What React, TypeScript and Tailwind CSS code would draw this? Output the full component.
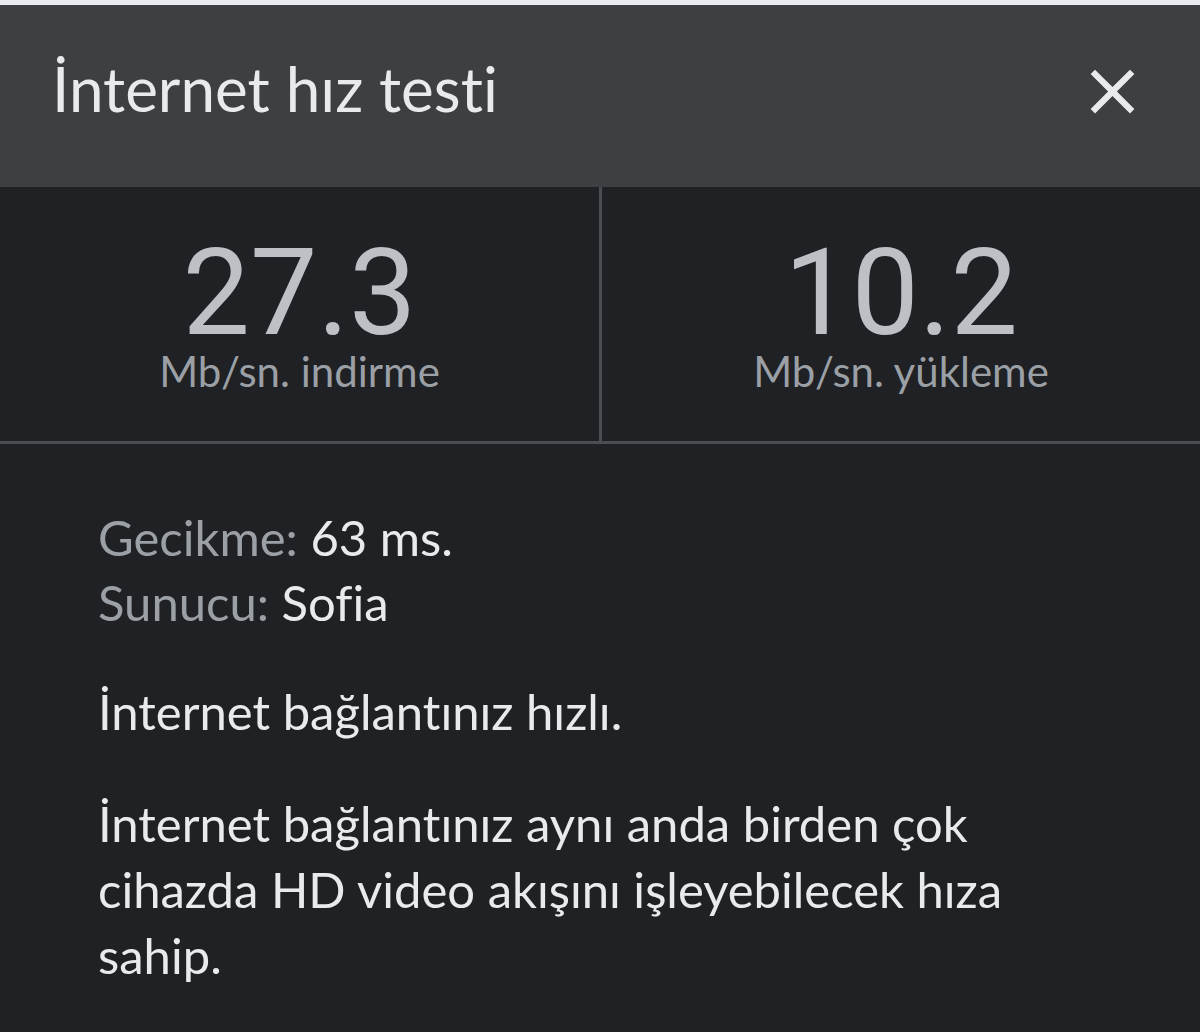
import { useState } from "react";

const stats = [
  { value: "27.3", unit: "Mb/sn. indirme" },
  { value: "10.2", unit: "Mb/sn. yükleme" },
];

function CloseIcon() {
  return (
    <svg viewBox="0 0 24 24" className="w-[75px] h-[75px]" fill="#e8eaed">
      <path d="M19 6.41 17.59 5 12 10.59 6.41 5 5 6.41 10.59 12 5 17.59 6.41 19 12 13.41 17.59 19 19 17.59 13.41 12z" />
    </svg>
  );
}

export default function App() {
  const [open, setOpen] = useState(true);

  return (
    <div className="w-[1200px] h-[1032px] overflow-hidden bg-[#202124] font-['Lato',sans-serif] [font-variant-ligatures:none]">
      <div className="h-[5px] bg-[#e8eaf0]" />
      {open && (
        <>
          <header className="h-[182px] bg-[#3c4043] flex items-start justify-between pl-[52px] pr-[50px]">
            <h1 className="mt-[52px] text-[62px] leading-[62px] text-[#e8eaed]">
              İnternet hız testi
            </h1>
            <button
              type="button"
              aria-label="Kapat"
              onClick={() => setOpen(false)}
              className="grid place-items-center mt-[49px]"
            >
              <CloseIcon />
            </button>
          </header>

          <div className="grid grid-cols-[602px_1fr] h-[257px] border-b-[3px] border-[#4a4d51]">
            {stats.map((s, i) => (
              <div
                key={s.unit}
                className={
                  i === 0
                    ? "flex flex-col items-center pt-[53px] border-r-[3px] border-[#4a4d51]"
                    : "flex flex-col items-center pt-[53px]"
                }
              >
                <span className="font-['Roboto',sans-serif] text-[120px] leading-[106px] text-[#bdc1c6]">
                  {s.value}
                </span>
                <span className="text-[42px] leading-[50px] text-[#9aa0a6]">
                  {s.unit}
                </span>
              </div>
            ))}
          </div>

          <div className="pl-[98px] pr-[98px] pt-[61px] text-[49px] leading-[65px] text-[#e8eaed]">
            <p>
              <span className="text-[#9aa0a6]">Gecikme: </span>63 ms.
            </p>
            <p>
              <span className="text-[#9aa0a6]">Sunucu: </span>Sofia
            </p>
            <p className="mt-[44px]">İnternet bağlantınız hızlı.</p>
            <p className="mt-[46px] leading-[66px]">
              İnternet bağlantınız aynı anda birden çok cihazda HD video akışını işleyebilecek hıza sahip.
            </p>
          </div>
        </>
      )}
    </div>
  );
}
